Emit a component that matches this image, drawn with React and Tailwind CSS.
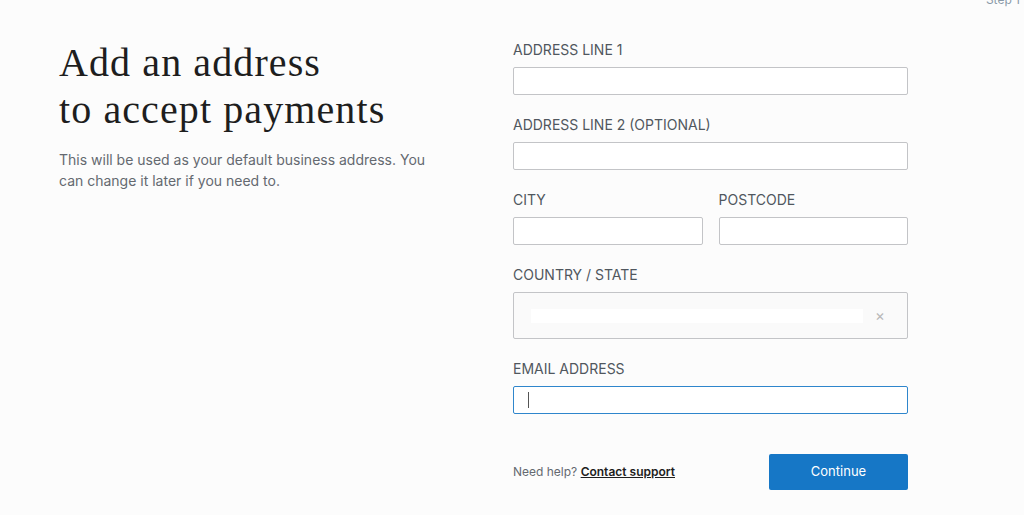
export default function App() {
  const label = "block text-[14px] leading-5 text-[#50575e] uppercase mb-[7px]";
  const input =
    "block w-full h-[28px] border border-[#c3c4c7] rounded-[2px] bg-white outline-none";
  return (
    <div
      className="w-[1024px] h-[515px] bg-[#fcfcfc] overflow-hidden relative"
      style={{ fontFamily: "Inter, 'Liberation Sans', sans-serif" }}
    >
      <div className="absolute right-[4px] top-[-9px] text-[12px] text-[#8a9aa8]">Step 1</div>
      <div className="flex pt-[39px]">
        <div className="ml-[59px] w-[370px]">
          <h1
            className="text-[40px] leading-[47px] text-[#1e1e1e] tracking-[1.1px]"
            style={{ fontFamily: "'Liberation Serif', serif" }}
          >
            Add an address
            <br />
            to accept payments
          </h1>
          <p className="mt-[16px] text-[14px] leading-[21px] text-[#646970]">
            This will be used as your default business address. You can change
            it later if you need to.
          </p>
        </div>
        <div className="ml-[84px] mt-[1px] w-[395px]">
          <label className={label}>Address line 1</label>
          <input className={input} />
          <label className={label + " mt-[20px]"}>Address line 2 (optional)</label>
          <input className={input} />
          <div className="flex gap-[16px] mt-[20px]">
            <div className="flex-1">
              <label className={label}>City</label>
              <input className={input} />
            </div>
            <div className="flex-1">
              <label className={label}>Postcode</label>
              <input className={input} />
            </div>
          </div>
          <label className={label + " mt-[20px]"}>Country / State</label>
          <div className="h-[47px] border border-[#c3c4c7] rounded-[2px] bg-[#fafafa] flex items-center pl-[17px] pr-[22px]">
            <div className="h-[14px] w-[332px] bg-white" />
            <span className="ml-auto text-[#b8b8b8] text-[15px] leading-none">×</span>
          </div>
          <label className={label + " mt-[20px]"}>Email address</label>
          <div className="h-[28px] border-[1.5px] border-[#2f86cc] rounded-[2px] bg-white flex items-center pl-[14px]">
            <div className="w-[1px] h-[16px] bg-[#555]" />
          </div>
          <div className="flex items-center mt-[40px]">
            <span className="text-[12px] text-[#646970]">
              Need help?{" "}
              <a className="font-semibold text-[#1e1e1e] underline">Contact support</a>
            </span>
            <button className="ml-auto w-[139px] h-[36px] bg-[#1677c6] rounded-[2px] text-white text-[13px]">
              Continue
            </button>
          </div>
        </div>
      </div>
    </div>
  );
}
